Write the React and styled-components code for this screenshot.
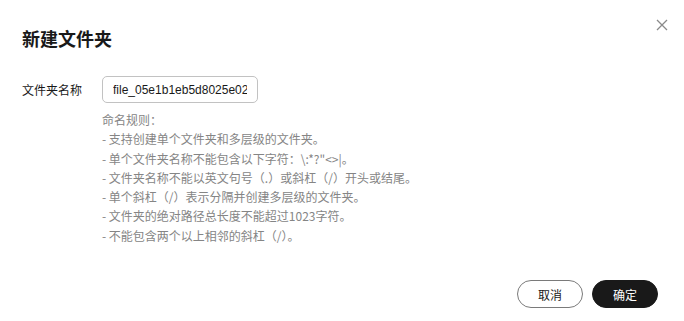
import React, { useState } from 'react';
import styled, { createGlobalStyle } from 'styled-components';

const GlobalStyle = createGlobalStyle`
    html, body {
        margin: 0;
        padding: 0;
        background: #ffffff;
        font-family: "Noto Sans CJK SC", "Liberation Sans", sans-serif;
    }
`;

const rules = [
    '命名规则：',
    '- 支持创建单个文件夹和多层级的文件夹。',
    '- 单个文件夹名称不能包含以下字符：\\:*?"<>|。',
    '- 文件夹名称不能以英文句号（.）或斜杠（/）开头或结尾。',
    '- 单个斜杠（/）表示分隔并创建多层级的文件夹。',
    '- 文件夹的绝对路径总长度不能超过1023字符。',
    '- 不能包含两个以上相邻的斜杠（/）。',
];

const App = () => {
    const [name, setName] = useState('file_05e1b1eb5d8025e02');

    return (
        <>
            <GlobalStyle />
            <Dialog>
                <Header>
                    <Title>新建文件夹</Title>
                    <CloseButton aria-label='close'>
                        <svg width='12' height='12' viewBox='0 0 12 12'>
                            <path d='M1 1 L11 11 M11 1 L1 11' stroke='#8a8a8a' strokeWidth='1.3' fill='none' />
                        </svg>
                    </CloseButton>
                </Header>
                <FormRow>
                    <Label>文件夹名称</Label>
                    <Field>
                        <Input value={name} onChange={e => setName(e.target.value)} />
                        <Rules>
                            {rules.map(line => (
                                <li key={line}>{line}</li>
                            ))}
                        </Rules>
                    </Field>
                </FormRow>
                <Footer>
                    <Button>取消</Button>
                    <Button primary>确定</Button>
                </Footer>
            </Dialog>
        </>
    );
};

const Dialog = styled.div`
    width: 684px;
    height: 321px;
    box-sizing: border-box;
    padding: 14px 26px 13px 22px;
    display: flex;
    flex-direction: column;
    background: #fff;
`;

const Header = styled.div`
    display: flex;
    justify-content: space-between;
    align-items: flex-start;
`;

const Title = styled.h1`
    margin: 12px 0 0;
    font-size: 18px;
    line-height: 24px;
    font-weight: 700;
    color: #191919;
`;

const CloseButton = styled.button`
    border: none;
    background: none;
    padding: 0;
    margin: 4px -11px 0 0;
    width: 14px;
    height: 14px;
    display: flex;
    align-items: center;
    justify-content: center;
    cursor: pointer;
`;

const FormRow = styled.div`
    display: flex;
    margin-top: 26px;
`;

const Label = styled.div`
    width: 80px;
    font-size: 12px;
    line-height: 28px;
    color: #191919;
`;

const Field = styled.div`
    display: flex;
    flex-direction: column;
`;

const Input = styled.input`
    width: 156px;
    height: 27px;
    box-sizing: border-box;
    border: 1px solid #c2c2c2;
    border-radius: 5px;
    padding: 0 10px;
    font-family: "Liberation Sans", Arial, sans-serif;
    font-size: 12px;
    color: #191919;
    outline: none;
`;

const Rules = styled.ul`
    list-style: none;
    margin: 7px 0 0;
    padding: 0;
    font-size: 12px;
    line-height: 19.3px;
    color: #858585;
`;

const Footer = styled.div`
    margin-top: auto;
    display: flex;
    justify-content: flex-end;
    gap: 9px;
`;

const Button = styled.button`
    width: 66px;
    height: 28px;
    border-radius: 14px;
    border: 1px solid ${props => (props.primary ? '#191919' : '#7a7a7a')};
    background: ${props => (props.primary ? '#191919' : '#fff')};
    color: ${props => (props.primary ? '#fff' : '#191919')};
    font-family: "Noto Sans CJK SC", sans-serif;
    font-size: 12px;
    cursor: pointer;
`;

export default App;
